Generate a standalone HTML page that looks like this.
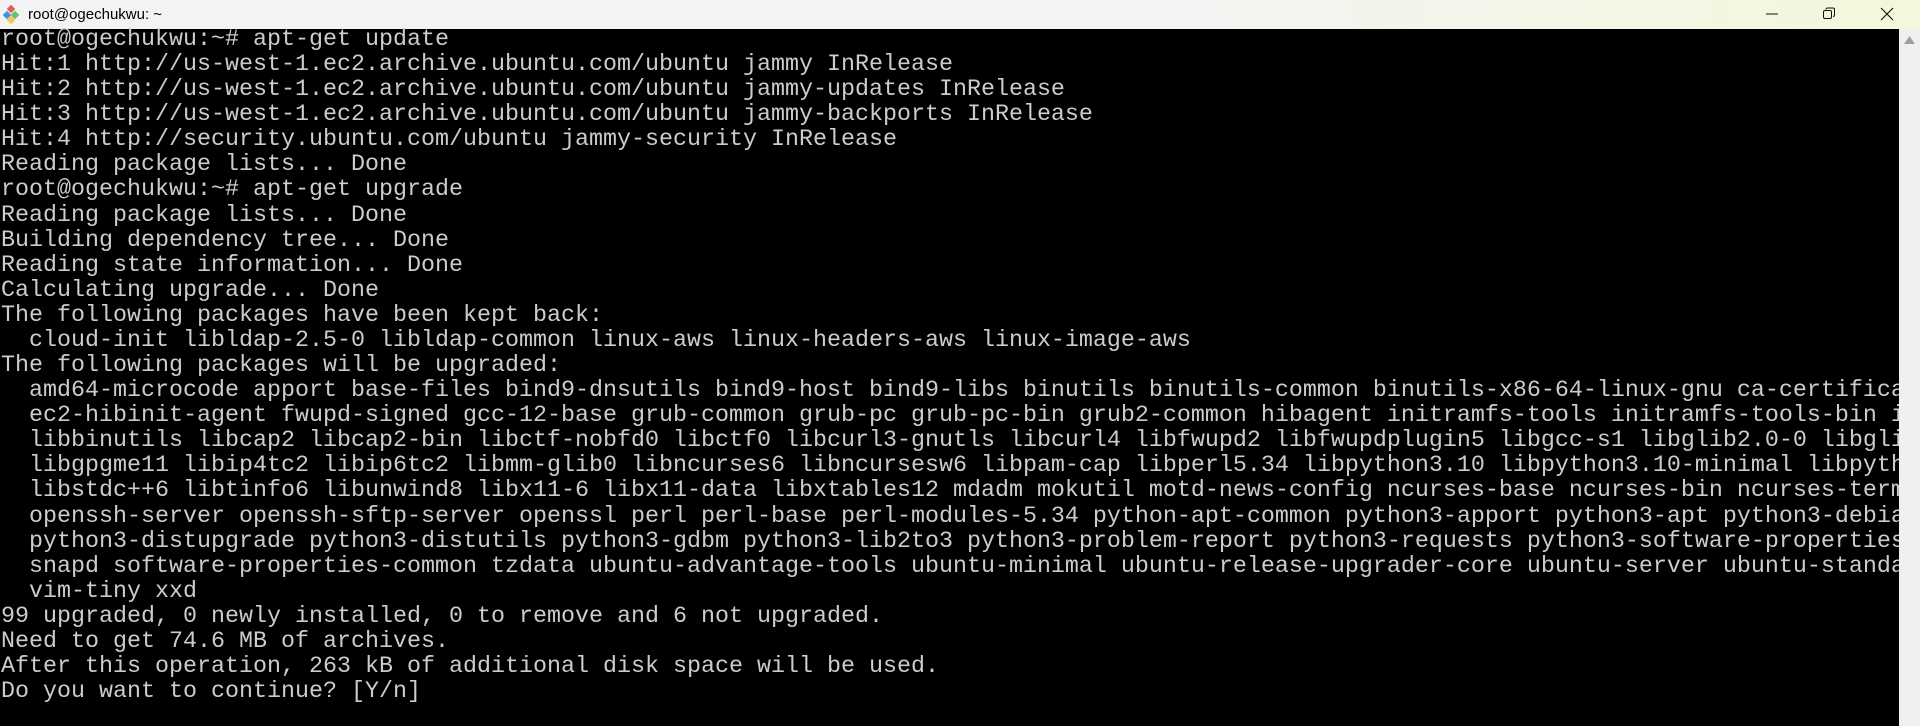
<!DOCTYPE html>
<html><head><meta charset="utf-8"><style>
html,body{margin:0;padding:0;width:1920px;height:726px;overflow:hidden;background:#000}
.title{position:absolute;left:0;top:0;width:1920px;height:29px;background:linear-gradient(90deg,#f3f3f3 0%,#f3f3f3 60%,#f1f8db 100%);font-family:"Liberation Sans",sans-serif;font-size:15px;color:#000}
.title .t{position:absolute;left:28px;top:6px}
.term{position:absolute;left:0;top:0;width:1899px;height:726px;overflow:hidden}
.term div{position:absolute;left:1px;height:24px;font-family:"Liberation Mono",monospace;font-size:23.33px;line-height:24px;color:#cccccc;white-space:pre}
.sb{position:absolute;left:1899px;top:29px;width:21px;height:697px;background:#f0f0f0}
</style></head><body>
<div class="title">
<svg style="position:absolute;left:3px;top:5px" width="20" height="20" viewBox="0 0 20 20">
<rect x="5" y="1" width="6" height="6" transform="rotate(45 8 4)" fill="#e85b5b"/>
<rect x="1" y="7" width="6" height="6" transform="rotate(45 4 10)" fill="#4a90e2"/>
<rect x="9" y="7" width="6" height="6" transform="rotate(45 12 10)" fill="#67c26a"/>
<rect x="5" y="12" width="6" height="6" transform="rotate(45 8 15)" fill="#f2c94c"/>
</svg>
<span class="t">root@ogechukwu: ~</span>
<svg style="position:absolute;left:1765px;top:7px" width="14" height="14"><line x1="1" y1="7" x2="13" y2="7" stroke="#111" stroke-width="1"/></svg>
<svg style="position:absolute;left:1822px;top:7px" width="14" height="14"><rect x="1.5" y="3.5" width="8" height="8" rx="1.5" fill="none" stroke="#111"/><path d="M4 2.5 Q4 1 5.5 1 H11 Q12.5 1 12.5 2.5 V8 Q12.5 9.5 11 9.5" fill="none" stroke="#111"/></svg>
<svg style="position:absolute;left:1880px;top:7px" width="14" height="14"><path d="M1 1 L13 13 M13 1 L1 13" stroke="#111" stroke-width="1.1"/></svg>
</div>
<div class="term">
<div style="top:28px">root@ogechukwu:~# apt-get update</div>
<div style="top:53.08px">Hit:1 http://us-west-1.ec2.archive.ubuntu.com/ubuntu jammy InRelease</div>
<div style="top:78.16px">Hit:2 http://us-west-1.ec2.archive.ubuntu.com/ubuntu jammy-updates InRelease</div>
<div style="top:103.24px">Hit:3 http://us-west-1.ec2.archive.ubuntu.com/ubuntu jammy-backports InRelease</div>
<div style="top:128.32px">Hit:4 http://security.ubuntu.com/ubuntu jammy-security InRelease</div>
<div style="top:153.4px">Reading package lists... Done</div>
<div style="top:178.48px">root@ogechukwu:~# apt-get upgrade</div>
<div style="top:203.56px">Reading package lists... Done</div>
<div style="top:228.64px">Building dependency tree... Done</div>
<div style="top:253.72px">Reading state information... Done</div>
<div style="top:278.8px">Calculating upgrade... Done</div>
<div style="top:303.88px">The following packages have been kept back:</div>
<div style="top:328.96px">  cloud-init libldap-2.5-0 libldap-common linux-aws linux-headers-aws linux-image-aws</div>
<div style="top:354.04px">The following packages will be upgraded:</div>
<div style="top:379.12px">  amd64-microcode apport base-files bind9-dnsutils bind9-host bind9-libs binutils binutils-common binutils-x86-64-linux-gnu ca-certificates</div>
<div style="top:404.2px">  ec2-hibinit-agent fwupd-signed gcc-12-base grub-common grub-pc grub-pc-bin grub2-common hibagent initramfs-tools initramfs-tools-bin initramfs</div>
<div style="top:429.28px">  libbinutils libcap2 libcap2-bin libctf-nobfd0 libctf0 libcurl3-gnutls libcurl4 libfwupd2 libfwupdplugin5 libgcc-s1 libglib2.0-0 libglib2.0</div>
<div style="top:454.36px">  libgpgme11 libip4tc2 libip6tc2 libmm-glib0 libncurses6 libncursesw6 libpam-cap libperl5.34 libpython3.10 libpython3.10-minimal libpython3.10</div>
<div style="top:479.44px">  libstdc++6 libtinfo6 libunwind8 libx11-6 libx11-data libxtables12 mdadm mokutil motd-news-config ncurses-base ncurses-bin ncurses-term</div>
<div style="top:504.52px">  openssh-server openssh-sftp-server openssl perl perl-base perl-modules-5.34 python-apt-common python3-apport python3-apt python3-debian</div>
<div style="top:529.6px">  python3-distupgrade python3-distutils python3-gdbm python3-lib2to3 python3-problem-report python3-requests python3-software-properties</div>
<div style="top:554.68px">  snapd software-properties-common tzdata ubuntu-advantage-tools ubuntu-minimal ubuntu-release-upgrader-core ubuntu-server ubuntu-standard</div>
<div style="top:579.76px">  vim-tiny xxd</div>
<div style="top:604.84px">99 upgraded, 0 newly installed, 0 to remove and 6 not upgraded.</div>
<div style="top:629.92px">Need to get 74.6 MB of archives.</div>
<div style="top:655px">After this operation, 263 kB of additional disk space will be used.</div>
<div style="top:680.08px">Do you want to continue? [Y/n]</div>
</div>
<div class="sb"><svg style="position:absolute;left:5px;top:7px" width="11" height="8"><path d="M5.5 0 L11 8 L0 8 Z" fill="#a0a0a0"/></svg></div>
</body></html>
